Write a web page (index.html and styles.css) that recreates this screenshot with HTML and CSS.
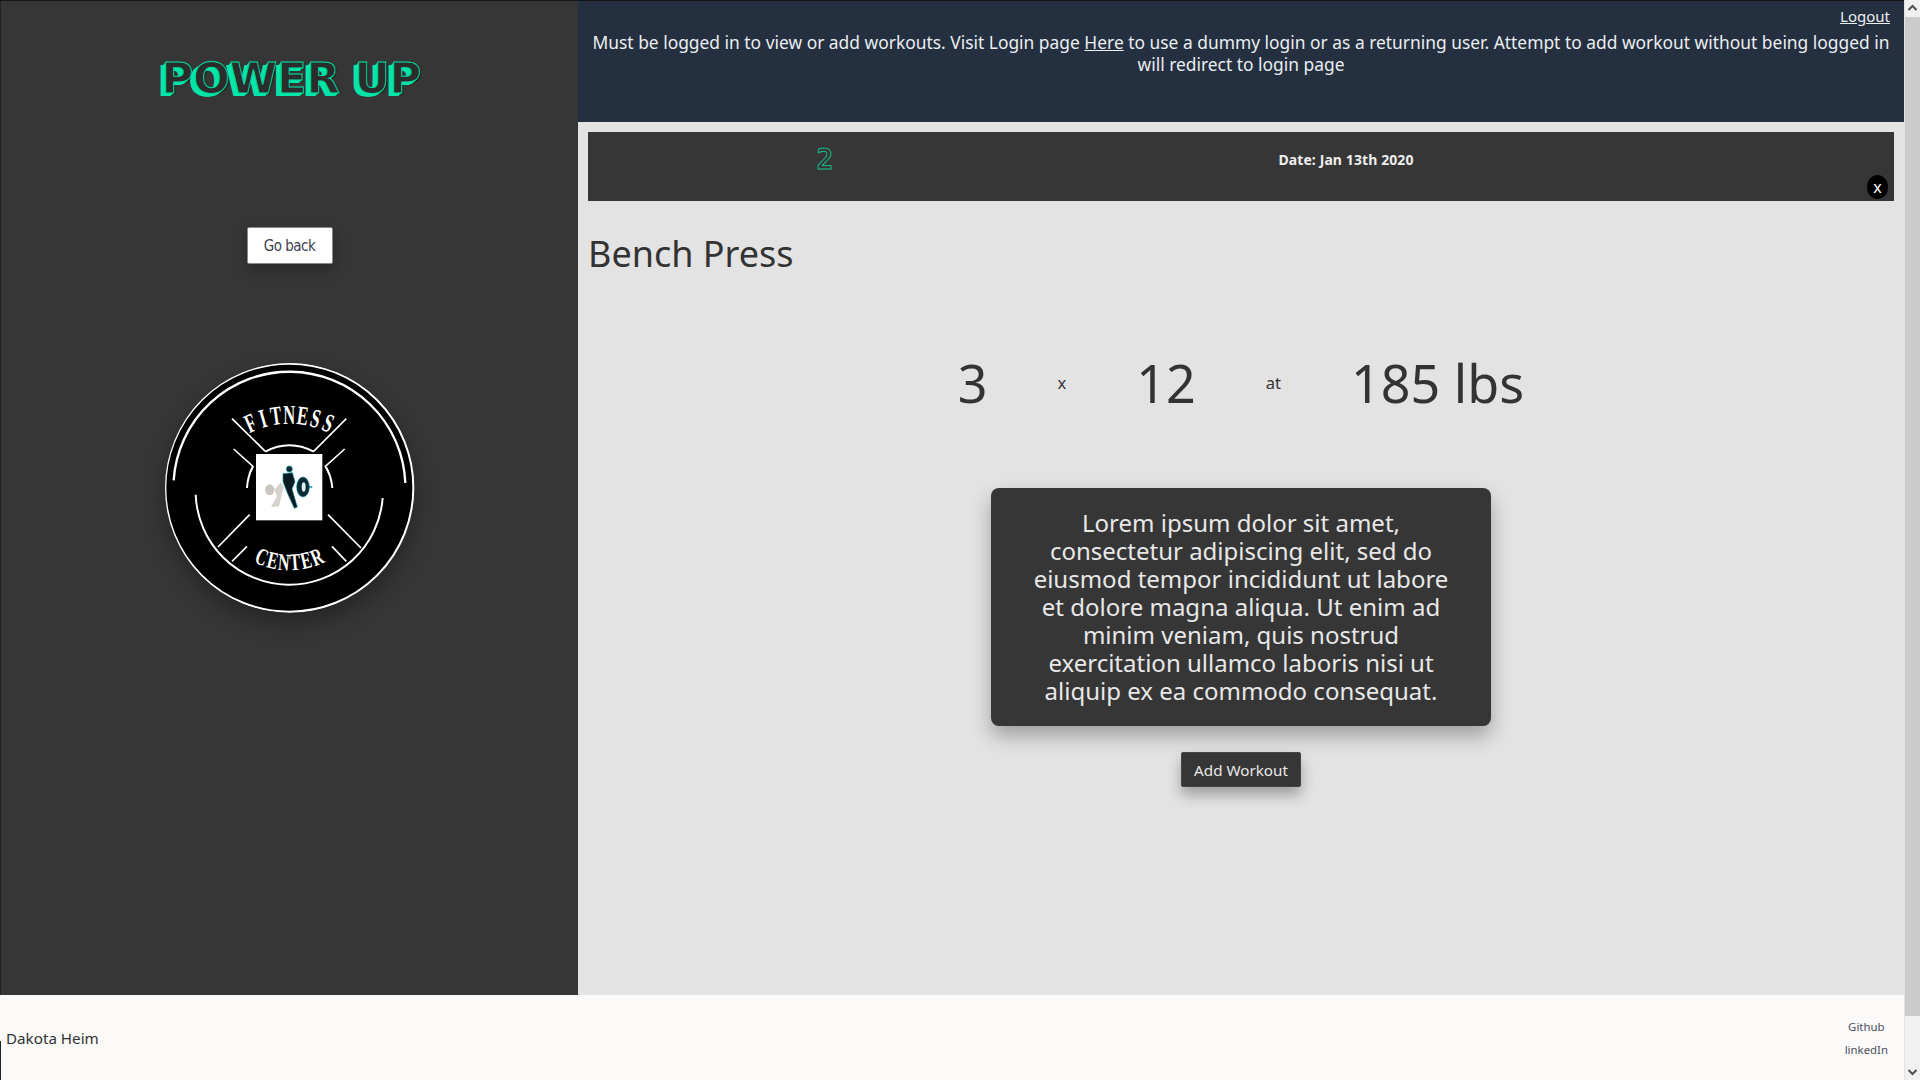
FILE: index.html
```html
<!DOCTYPE html>
<html lang="en">
<head>
<meta charset="utf-8">
<title>Power Up</title>
<link rel="stylesheet" href="styles.css">
</head>
<body>
<div class="window">
  <div class="page">
    <div class="top">
      <aside class="sidebar">
        <h1 class="brand">POWER UP</h1>
        <button class="back">Go back</button>
        <svg class="logo" viewBox="0 0 250 250" role="img" aria-label="Fitness Center logo">
          <g transform="scale(.33333) translate(-44 -40)">
            <circle cx="417" cy="414" r="372" fill="#000" stroke="#fff" stroke-width="6"/>
            <path d="M70,392 A348,348 0 0 1 765,400" fill="none" stroke="#fff" stroke-width="7"/>
            <path d="M136,435 A281,281 0 0 0 697,445" fill="none" stroke="#fff" stroke-width="6"/>
            <path d="M290,415 Q292,380 307,352 M345,306 Q417,268 490,306 M527,352 Q543,380 546,415" fill="none" stroke="#fff" stroke-width="6"/>
            <path d="M245,207 L345,305 M588,207 L490,305 M250,298 L308,350 L297,372 M583,298 L525,350 L536,372 M298,495 L203,592 M533,495 L632,595 M290,590 L245,635 M545,590 L588,635" fill="none" stroke="#fff" stroke-width="5"/>
            <g class="logo-text logo-top" text-anchor="middle">
              <text transform="rotate(-24 417 482) translate(417 222) scale(.62 1)">F</text>
              <text transform="rotate(-16 417 482) translate(417 222) scale(.62 1)">I</text>
              <text transform="rotate(-8 417 482) translate(417 222) scale(.62 1)">T</text>
              <text transform="translate(417 222) scale(.62 1)">N</text>
              <text transform="rotate(8 417 482) translate(417 222) scale(.62 1)">E</text>
              <text transform="rotate(16 417 482) translate(417 222) scale(.62 1)">S</text>
              <text transform="rotate(24 417 482) translate(417 222) scale(.62 1)">S</text>
            </g>
            <g class="logo-text logo-bottom" text-anchor="middle">
              <text transform="rotate(22.7 417 424) translate(417 662) scale(.66 1)">C</text>
              <text transform="rotate(13.5 417 424) translate(417 662) scale(.66 1)">E</text>
              <text transform="rotate(4.5 417 424) translate(417 662) scale(.66 1)">N</text>
              <text transform="rotate(-4.5 417 424) translate(417 662) scale(.66 1)">T</text>
              <text transform="rotate(-13.5 417 424) translate(417 662) scale(.66 1)">E</text>
              <text transform="rotate(-22.7 417 424) translate(417 662) scale(.66 1)">R</text>
            </g>
            <rect x="317" y="313" width="199" height="199" fill="#fff"/>
            <ellipse cx="358" cy="420" rx="14" ry="16" fill="#c9c7bf"/>
            <path d="M372,420 L392,398 L400,412 L386,470 L362,472 L380,440 Z" fill="#d5d3cb"/>
            <circle cx="417" cy="358" r="9" fill="#0b2a33" stroke="#0f8ea0" stroke-width="2"/>
            <path d="M398,372 L426,369 L434,396 L425,418 L441,472 L432,476 L412,432 L398,396 Z" fill="#0b1a20" stroke="#0f8ea0" stroke-width="2"/>
            <path d="M470,412 L486,412" stroke="#0f8ea0" stroke-width="4"/>
            <ellipse cx="458" cy="412" rx="19" ry="30" fill="#0b2a33" stroke="#0f8ea0" stroke-width="2"/>
            <ellipse cx="460" cy="412" rx="6" ry="14" fill="#dfeff2"/>
          </g>
        </svg>
      </aside>
      <main class="main">
        <header class="notice">
          <a class="logout" href="#">Logout</a>
          <p class="notice-text">Must be logged in to view or add workouts. Visit Login page <a href="#">Here</a> to use a dummy login or as a returning user. Attempt to add workout without being logged in will redirect to login page</p>
        </header>
        <section class="content">
          <div class="workout-bar">
            <span class="workout-num">2</span>
            <span class="workout-date">Date: Jan 13th 2020</span>
            <button class="close">x</button>
          </div>
          <h2 class="exercise">Bench Press</h2>
          <div class="stats">
            <span class="big">3</span>
            <span class="small">x</span>
            <span class="big">12</span>
            <span class="small">at</span>
            <span class="big">185 lbs</span>
          </div>
          <div class="card">Lorem ipsum dolor sit amet, consectetur adipiscing elit, sed do eiusmod tempor incididunt ut labore et dolore magna aliqua. Ut enim ad minim veniam, quis nostrud exercitation ullamco laboris nisi ut aliquip ex ea commodo consequat.</div>
          <button class="add">Add Workout</button>
        </section>
      </main>
    </div>
    <footer class="footer">
      <span class="author">Dakota Heim</span>
      <div class="links">
        <a href="#">Github</a>
        <a href="#">linkedIn</a>
      </div>
    </footer>
  </div>
  <div class="scrollbar">
    <svg class="arrow" viewBox="0 0 15 17"><path d="M3.5 10 L7.5 6 L11.5 10" fill="none" stroke="#505050" stroke-width="2"/></svg>
    <div class="thumb"></div>
    <div class="track"></div>
    <svg class="arrow" viewBox="0 0 15 17"><path d="M3.5 7 L7.5 11 L11.5 7" fill="none" stroke="#505050" stroke-width="2"/></svg>
  </div>
</div>
</body>
</html>
```
FILE: styles.css
```css
* { box-sizing: border-box; }
html, body { margin: 0; height: 100%; overflow: hidden; }
body { font-family: "Noto Sans", sans-serif; color: #333; background: #e3e3e3; }
.window { display: flex; height: 1080px; }
.page { flex: 1; display: flex; flex-direction: column; min-width: 0; border-top: 1px solid #14161a; position: relative; }
.page::before { content: ""; position: absolute; left: 0; bottom: 0; width: 1px; height: 39px; background: #222; }
.top { flex: 1; display: flex; min-height: 0; }

.sidebar { width: 578px; padding-left: 1px; background: #363636; box-shadow: inset 1px 0 0 #222; display: flex; flex-direction: column; align-items: center; }
.brand { margin: 49px 0 0 4px; font: bold 43px/56px "DejaVu Sans", sans-serif; color: #2c2c2c; -webkit-text-stroke: 1px #00d9a0; text-shadow: -1px 1px 0 #00e6a8, -2px 2px 0 #00e6a8, -3px 3px 0 #00e6a8, -4px 3px 0 #00e6a8, -5px 3px 0 #00e6a8, 1px 1px 1px #111; white-space: nowrap; }
.back { margin-top: 121px; width: 86px; height: 37px; background: #fff; border: 1px solid #888; border-radius: 2px; font: 15px "DejaVu Sans", sans-serif; font-stretch: condensed; letter-spacing: -.5px; color: #3a4250; padding: 0; box-shadow: 0 6px 14px rgba(0,0,0,.25); }
.logo { width: 250px; height: 250px; margin-top: 99px; border-radius: 50%; box-shadow: 0 10px 22px rgba(0,0,0,.32); }
.logo-text { font-family: "Liberation Serif", serif; font-weight: 700; fill: #fff; }
.logo-top { font-size: 80px; }
.logo-bottom { font-size: 72px; }

.main { flex: 1; min-width: 0; display: flex; flex-direction: column; }
.notice { height: 121px; background: #242f40; color: #eaeef0; padding: 5px 10px 0; display: flex; flex-direction: column; }
.notice a { color: inherit; }
.logout { align-self: flex-end; margin-right: 4px; font-size: 15px; line-height: 20px; }
.notice-text { margin: 6px 0 0; text-align: center; font-size: 17.4px; line-height: 21.6px; }

.content { flex: 1; padding: 10px 10px 0; display: flex; flex-direction: column; align-items: center; }
.workout-bar { align-self: stretch; height: 69px; background: #363636; display: grid; grid-template-columns: 474px 568px; align-items: start; position: relative; padding-top: 12px; }
.workout-num { justify-self: center; font: bold 28px/32px "DejaVu Sans Mono", monospace; color: #363636; -webkit-text-stroke: 1px #12b886; }
.workout-date { justify-self: center; font-size: 14px; font-weight: 700; letter-spacing: .1px; color: #eee; padding-top: 6px; }
.close { position: absolute; right: 6px; bottom: 2px; width: 21px; height: 24px; border-radius: 50%; border: 0; background: #000; color: #fff; padding: 0; font: 16px "Noto Sans", sans-serif; }

.exercise { align-self: flex-start; margin: 29px 0 0; font-weight: 400; font-size: 36px; line-height: 48px; color: #333; }
.stats { display: flex; align-items: center; margin-top: 68px; height: 72px; }
.big { font-size: 52px; margin: 0 35px; color: #333; }
.small { font-size: 16.5px; margin: 0 35px; color: #333; }
.card { width: 500px; height: 238px; margin-top: 70px; padding: 21px 40px 0; background: #363636; color: #e8e8e8; border-radius: 8px; font-size: 24px; line-height: 28px; text-align: center; box-shadow: 0 10px 20px rgba(0,0,0,.3); }
.add { margin-top: 26px; width: 120px; height: 35px; background: #363636; color: #e8e8e8; border: 1px solid #444; border-radius: 2px; font: 15.2px "Noto Sans", sans-serif; padding: 0; box-shadow: 0 8px 14px rgba(0,0,0,.3); }

.footer { height: 85px; background: #fbfaf9; display: flex; align-items: center; justify-content: space-between; padding: 0 16px 0 6px; }
.author { font-size: 15.2px; color: #333; }
.links { display: flex; flex-direction: column; align-items: center; gap: 6px; }
.links a { font-size: 11.4px; line-height: 17px; color: #4a5060; text-decoration: none; }

.scrollbar { width: 15px; margin-left: 1px; background: #f1f1f1; display: flex; flex-direction: column; }
.arrow { width: 15px; height: 17px; flex: none; }
.thumb { height: 999px; background: #cbcbcb; flex: none; }
.track { flex: 1; }
```
